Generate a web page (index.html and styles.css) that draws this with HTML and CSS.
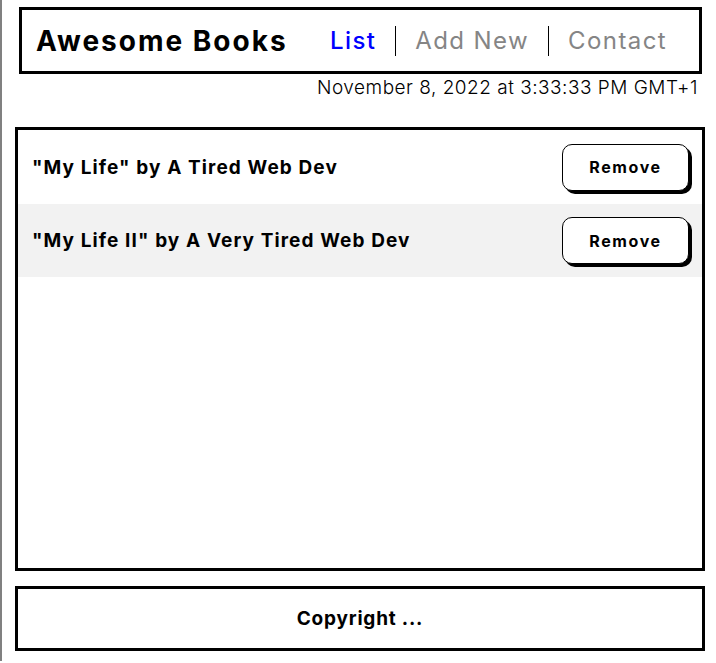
FILE: index.html
```html
<!DOCTYPE html>
<html lang="en">
<head>
<meta charset="utf-8">
<title>Awesome Books</title>
<link rel="stylesheet" href="styles.css">
</head>
<body>
<div class="page">
  <header class="header">
    <h1 class="brand">Awesome Books</h1>
    <nav class="nav">
      <a class="nav-link active" href="#">List</a>
      <span class="sep"></span>
      <a class="nav-link" href="#">Add New</a>
      <span class="sep"></span>
      <a class="nav-link" href="#">Contact</a>
    </nav>
  </header>
  <p class="date">November 8, 2022 at 3:33:33 PM GMT+1</p>
  <main class="books">
    <div class="book">
      <p class="title">"My Life" by A Tired Web Dev</p>
      <button class="remove">Remove</button>
    </div>
    <div class="book alt">
      <p class="title">"My Life II" by A Very Tired Web Dev</p>
      <button class="remove">Remove</button>
    </div>
  </main>
  <footer class="footer">Copyright ...</footer>
</div>
</body>
</html>
```
FILE: styles.css
```css
* { box-sizing: border-box; }
html, body { margin: 0; padding: 0; background: #fff; }
body { font-family: Inter, "Open Sans", sans-serif; color: #000; }
.page {
  border-left: 2px solid #808080;
  padding: 7px 11px 0 13px;
  min-height: 661px;
  width: 716px;
}
.header {
  margin: 0 3px 0 4px;
  height: 67px;
  border: 3px solid #000;
  display: flex;
  align-items: center;
  padding-left: 14px;
}
.brand {
  margin: 0;
  font-size: 28px;
  font-weight: 700;
  letter-spacing: 2px;
  width: 294px;
}
.nav { display: flex; align-items: center; }
.nav-link {
  font-size: 24px;
  color: #858585;
  text-decoration: none;
  font-weight: 400;
  letter-spacing: 1.4px;
}
.nav-link.active { color: #0000ff; font-weight: 500; }
.sep {
  width: 1px;
  height: 30px;
  background: #000;
  margin: 0 19px 0 19px;
}
.date {
  margin: 0;
  height: 53px;
  padding-top: 2px;
  text-align: right;
  padding-right: 7px;
  font-size: 19px;
  font-weight: 300;
  line-height: 24px;
  letter-spacing: 0.5px;
}
.books {
  border: 3px solid #000;
  height: 444px;
}
.book {
  display: flex;
  align-items: center;
  justify-content: space-between;
  height: 74px;
  padding: 0 13px 0 14px;
}
.book.alt { background: #f2f2f2; height: 73px; }
.title {
  margin: 0;
  font-size: 19px;
  font-weight: 700;
  letter-spacing: 1.1px;
}
.remove {
  width: 127px;
  height: 47px;
  border: 1px solid #000;
  border-radius: 10px;
  background: #fff;
  box-shadow: 3px 3px 0 #000;
  font-family: Inter, sans-serif;
  font-size: 16px;
  font-weight: 700;
  letter-spacing: 1.6px;
  color: #000;
}
.footer {
  margin-top: 15px;
  height: 65px;
  border: 3px solid #000;
  display: flex;
  align-items: center;
  justify-content: center;
  font-size: 19px;
  font-weight: 700;
  letter-spacing: 0.8px;
}
```
